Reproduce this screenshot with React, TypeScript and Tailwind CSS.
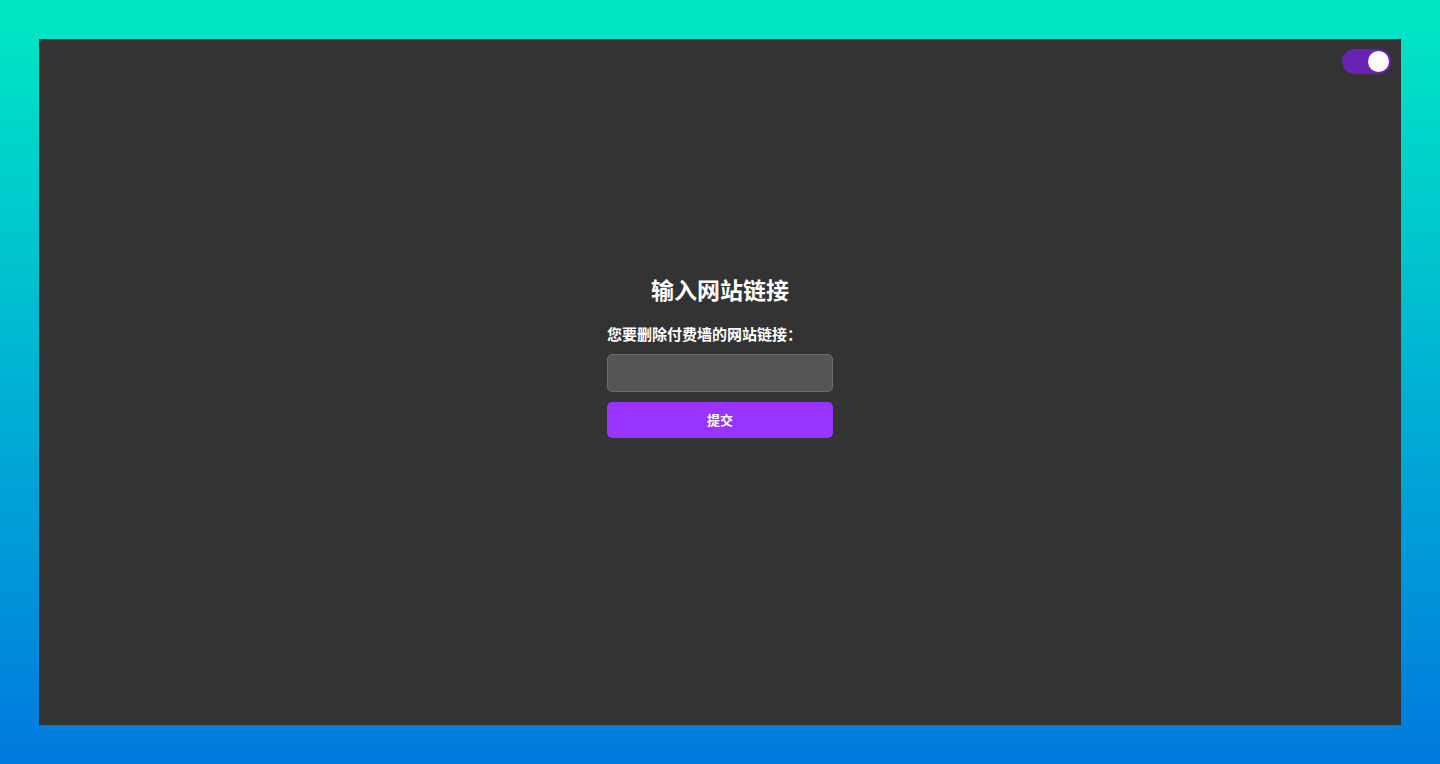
import { useState } from 'react';

export default function App() {
  const [dark, setDark] = useState(true);
  const [url, setUrl] = useState('');

  return (
    <div
      className="h-[764px] w-full p-[39px] bg-gradient-to-b from-[#00e8c2] to-[#0078dd]"
      style={{ fontFamily: '"Noto Sans CJK SC", "Liberation Sans", sans-serif' }}
    >
      <div className="relative flex h-full w-full items-center justify-center bg-[#333333] pb-[52px]">
        {/* theme toggle */}
        <button
          onClick={() => setDark(!dark)}
          className="absolute right-[10px] top-[10px] flex h-[25px] w-[49px] items-center rounded-full bg-[#6a22b4] px-[2px]"
        >
          <span className={`h-[21px] w-[21px] rounded-full bg-white ${dark ? 'ml-auto' : ''}`} />
        </button>

        <form className="flex w-[226px] flex-col" onSubmit={(e) => e.preventDefault()}>
          <h1 className="mb-[21px] text-center text-[23px] font-bold leading-[28px] text-white">
            输入网站链接
          </h1>
          <label className="mb-[10px] text-[15px] font-bold leading-[20px] text-white">
            您要删除付费墙的网站链接：
          </label>
          <input
            value={url}
            onChange={(e) => setUrl(e.target.value)}
            className="h-[38px] w-full rounded-[5px] border border-[#6b6b6b] bg-[#555555] px-2 text-sm text-white outline-none"
          />
          <button
            type="submit"
            className="mt-[10px] h-[36px] w-full rounded-[5px] bg-[#9933ff] text-[13px] font-bold text-white"
          >
            提交
          </button>
        </form>
      </div>
    </div>
  );
}
